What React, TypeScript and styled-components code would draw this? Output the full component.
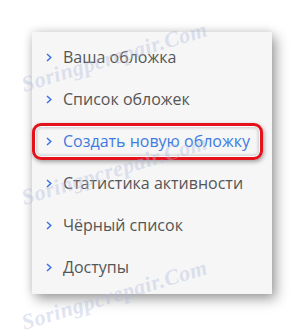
import React from "react";
import styled, { createGlobalStyle } from "styled-components";

const Global = createGlobalStyle`
  html, body { margin: 0; padding: 0; background: #ffffff; }
  body { width: 304px; height: 329px; overflow: hidden; font-family: "Open Sans", "Noto Sans", sans-serif; }
`;

const Page = styled.div`
  position: relative;
  width: 304px;
  height: 329px;
  padding: 32px 0 0 32px;
  box-sizing: border-box;
`;

const Panel = styled.nav`
  width: 240px;
  height: 262px;
  background: #f6f6f6;
  box-sizing: border-box;
  padding: 4px 0 0 0;
  box-shadow: 4px 5px 12px rgba(0, 0, 0, 0.38), -1px -1px 8px rgba(0, 0, 0, 0.1);
`;

const List = styled.ul`
  list-style: none;
  margin: 0;
  padding: 0;
  display: flex;
  flex-direction: column;
`;

const Item = styled.li<{ $active?: boolean }>`
  position: relative;
  height: 42px;
  display: flex;
  align-items: center;
  gap: 11px;
  padding-left: 14px;
  font-size: 16px;
  color: ${(p) => (p.$active ? "#3e7be0" : "#555555")};
  ${(p) =>
    p.$active &&
    `
    &::after {
      content: "";
      position: absolute;
      left: 0;
      top: 3px;
      width: 231px;
      height: 37px;
      box-sizing: border-box;
      border: 3px solid #e4131b;
      border-radius: 9px;
      box-shadow: inset 0 0 0 1px #ffffff, inset 0 0 3px 2px rgba(0,0,0,0.18), 1px 2px 4px rgba(0,0,0,0.35);
    }
  `}
`;

const Chevron = styled.svg`
  width: 6px;
  height: 9px;
  flex: none;
`;

const Watermark = styled.div<{ $top: number }>`
  position: absolute;
  left: 18px;
  top: ${(p) => p.$top}px;
  transform: rotate(-17deg);
  font-family: "Liberation Serif", serif;
  font-style: italic;
  font-weight: bold;
  font-size: 22px;
  letter-spacing: 0.5px;
  color: rgba(175, 185, 220, 0.4);
  pointer-events: none;
  white-space: nowrap;
`;

const items = [
  "Ваша обложка",
  "Список обложек",
  "Создать новую обложку",
  "Статистика активности",
  "Чёрный список",
  "Доступы",
];

export default function App() {
  return (
    <>
      <Global />
      <Page>
        <Panel>
          <List>
            {items.map((t, i) => (
              <Item key={t} $active={i === 2}>
                <Chevron viewBox="0 0 6 9">
                  <polyline points="1,1 4.8,4.5 1,8" fill="none" stroke="#3b72e4" strokeWidth="1.5" />
                </Chevron>
                {t}
              </Item>
            ))}
          </List>
        </Panel>
        <Watermark $top={44}>Soringpcrepair.Com</Watermark>
        <Watermark $top={157}>Soringpcrepair.Com</Watermark>
        <Watermark $top={282}>Soringpcrepair.Com</Watermark>
      </Page>
    </>
  );
}
